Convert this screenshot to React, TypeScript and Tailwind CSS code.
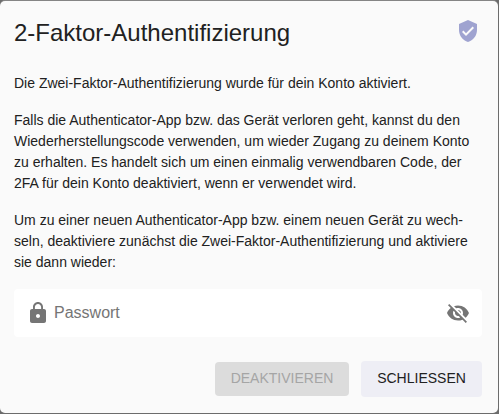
const SHIELD =
  "M12 1L3 5v6c0 5.55 3.84 10.74 9 12 5.16-1.26 9-6.45 9-12V5l-9-4zm-2 16l-4-4 1.41-1.41L10 14.17l6.59-6.59L18 9l-8 8z";
const LOCK =
  "M18 8h-1V6c0-2.76-2.24-5-5-5S7 3.24 7 6v2H6c-1.1 0-2 .9-2 2v10c0 1.1.9 2 2 2h12c1.1 0 2-.9 2-2V10c0-1.1-.9-2-2-2zm-6 9c-1.1 0-2-.9-2-2s.9-2 2-2 2 .9 2 2-.9 2-2 2zm3.1-9H8.9V6c0-1.71 1.39-3.1 3.1-3.1 1.71 0 3.1 1.39 3.1 3.1v2z";
const EYE_OFF =
  "M12 7c2.76 0 5 2.24 5 5 0 .65-.13 1.26-.36 1.83l2.92 2.92c1.51-1.26 2.7-2.89 3.43-4.75-1.73-4.39-6-7.5-11-7.5-1.4 0-2.74.25-3.98.7l2.16 2.16C10.74 7.13 11.35 7 12 7zM2 4.27l2.28 2.28.46.46C3.08 8.3 1.78 10.02 1 12c1.73 4.39 6 7.5 11 7.5 1.55 0 3.03-.3 4.38-.84l.42.42L19.73 22 21 20.73 3.27 3 2 4.27zM7.53 9.8l1.55 1.55c-.05.21-.08.43-.08.65 0 1.66 1.34 3 3 3 .22 0 .44-.03.65-.08l1.55 1.55c-.67.33-1.41.53-2.2.53-2.76 0-5-2.24-5-5 0-.79.2-1.53.53-2.2zm4.31-.78l3.15 3.15.02-.16c0-1.66-1.34-3-3-3l-.17.01z";

function Icon({ path, className }: { path: string; className: string }) {
  return (
    <svg viewBox="0 0 24 24" fill="currentColor" className={`shrink-0 ${className}`} aria-hidden="true">
      <path d={path} />
    </svg>
  );
}

export default function App() {
  return (
    <div className="h-screen overflow-hidden bg-[#6c6c6c] pt-px pr-px pb-px font-['Liberation_Sans',Arial,sans-serif] text-[#212121]">
      <main className="flex h-full flex-col rounded-[5px] bg-[#fafafa] pr-4 pl-3.5 shadow-[0_-1px_0_#858585]">
        <header className="flex items-start justify-between pt-[14px]">
          <h1 className="pt-px text-2xl leading-[34px] whitespace-nowrap">2-Faktor-Authentifizierung</h1>
          <Icon path={SHIELD} className="mt-1 mr-0.5 size-6 text-[#9fa3d0]" />
        </header>
        <div className="mt-[23px] space-y-4 text-sm leading-[21px] whitespace-nowrap">
          <p>Die Zwei-Faktor-Authentifizierung wurde für dein Konto aktiviert.</p>
          <p>
            Falls die Authenticator-App bzw. das Gerät verloren geht, kannst du den
            <br />
            Wiederherstellungscode verwenden, um wieder Zugang zu deinem Konto
            <br />
            zu erhalten. Es handelt sich um einen einmalig verwendbaren Code, der
            <br />
            2FA für dein Konto deaktiviert, wenn er verwendet wird.
          </p>
          <p>
            Um zu einer neuen Authenticator-App bzw. einem neuen Gerät zu wech-
            <br />
            seln, deaktiviere zunächst die Zwei-Faktor-Authentifizierung und aktiviere
            <br />
            sie dann wieder:
          </p>
        </div>
        <label className="mt-4 flex h-12 shrink-0 items-center rounded bg-white px-3 text-[#757575]">
          <Icon path={LOCK} className="size-6" />
          <input
            type="password"
            placeholder="Passwort"
            className="ml-1 min-w-0 flex-1 text-base outline-none placeholder:text-[#757575]"
          />
          <Icon path={EYE_OFF} className="size-6" />
        </label>
        <div className="mt-6 flex items-center justify-end gap-3 text-sm">
          <button disabled className="h-[34px] w-[134px] rounded bg-[#dcdcdc] pb-0.5 text-[#a5a5a5]">
            DEAKTIVIEREN
          </button>
          <button className="h-9 w-[121px] rounded bg-[#eeeef5] pb-0.5">SCHLIESSEN</button>
        </div>
      </main>
    </div>
  );
}
